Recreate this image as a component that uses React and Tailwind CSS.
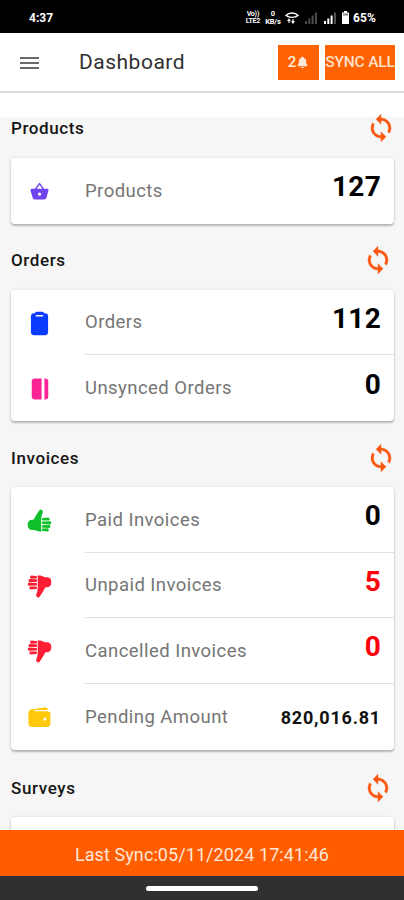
import React from "react";
import {
  IoBasket,
  IoClipboard,
  IoJournal,
  IoThumbsUp,
  IoThumbsDown,
  IoWallet,
  IoNotifications,
} from "react-icons/io5";

const sections = [
  {
    title: "Products",
    pad: "pr-2",
    head: "h-[65px] pt-[4px]",
    rows: [{ label: "Products", value: "127", icon: IoBasket, tint: "text-[#7044ee]", size: 23 }],
  },
  {
    title: "Orders",
    pad: "pr-[11px]",
    head: "h-[66px] pt-[7px]",
    rows: [
      { label: "Orders", value: "112", icon: IoClipboard, tint: "text-[#0a3cff]", size: 25 },
      { label: "Unsynced Orders", value: "0", icon: IoJournal, tint: "text-[#fb2596]", size: 24 },
    ],
  },
  {
    title: "Invoices",
    pad: "pr-2",
    head: "h-[66px] pt-[8px]",
    rows: [
      { label: "Paid Invoices", value: "0", icon: IoThumbsUp, tint: "text-[#0fc02c]", size: 25 },
      { label: "Unpaid Invoices", value: "5", icon: IoThumbsDown, tint: "text-[#ff1f35]", size: 25, red: true },
      { label: "Cancelled Invoices", value: "0", icon: IoThumbsDown, tint: "text-[#ff1f35]", size: 25, red: true },
      { label: "Pending Amount", value: "820,016.81", icon: IoWallet, tint: "text-[#ffc80a]", size: 25, small: true },
    ],
  },
  { title: "Surveys", pad: "pr-[11px]", head: "h-[67px] pt-[9px]", rows: [] },
];

function SyncIcon() {
  return (
    <svg width="30" height="30" viewBox="0 0 24 24" fill="#f9560f" stroke="#f9560f" strokeWidth="0.3">
      <path d="M12 4V1L8 5l4 4V6c3.31 0 6 2.69 6 6 0 1.01-.25 1.97-.7 2.8l1.46 1.46C19.54 15.03 20 13.57 20 12c0-4.42-3.58-8-8-8zm0 14c-3.31 0-6-2.69-6-6 0-1.01.25-1.97.7-2.8L5.24 7.74C4.46 8.97 4 10.43 4 12c0 4.42 3.58 8 8 8v3l4-4-4-4v3z" />
    </svg>
  );
}

function Bars({ dim }) {
  return (
    <svg width="14" height="12" viewBox="0 0 14 12" fill={dim ? "#4d4d4d" : "#fff"}>
      <rect x="1" y="9" width="2" height="3" />
      <rect x="4.3" y="6.5" width="2" height="5.5" />
      <rect x="7.6" y="3.5" width="2" height="8.5" />
      <rect x="10.9" y="0.5" width="2" height="11.5" fill={dim ? "#4d4d4d" : "#555"} />
    </svg>
  );
}

function StatusBar() {
  return (
    <div className="flex h-[33px] shrink-0 items-center bg-black pl-[29px] pr-[28px] pt-0.5 text-white">
      <span className="text-[12px] font-bold">4:37</span>
      <div className="ml-auto flex items-center">
        <div className="mr-[5px] flex w-[14px] flex-col items-center text-[7px] font-bold leading-[7px] tracking-[-0.2px]">
          <div>Vo))</div>
          <div>LTE2</div>
        </div>
        <div className="mr-[4px] flex w-[16px] flex-col items-center text-[7.5px] font-bold leading-[8px] tracking-[-0.2px]">
          <div>0</div>
          <div>KB/s</div>
        </div>
        <svg className="mr-[5px]" width="14" height="12" viewBox="0 0 14 12" fill="none" stroke="#fff" strokeWidth="1.4">
          <path d="M1 3.5C4 .2 10 .2 13 3.5C10 6 4 6 1 3.5Z" />
          <path d="M4 11V7M2.6 9 4 7.2 5.4 9M8 7V11M6.6 9.2 8 11l1.4-1.8" strokeWidth="1.1" />
        </svg>
        <Bars dim />
        <div className="w-[5px]" />
        <Bars />
        <svg className="ml-[5px] mr-[4px]" width="7" height="13" viewBox="0 0 7 13">
          <path d="M2 0h3v1.5h2V13H0V1.5h2z" fill="#fff" />
          <path d="M1 2.5h5v2H1z" fill="#888" />
        </svg>
        <span className="text-[12px] font-bold tracking-[0.15px]">65%</span>
      </div>
    </div>
  );
}

function Header() {
  return (
    <div className="flex h-[60px] shrink-0 items-center border-b-2 border-[#dcdcdc] bg-white pl-[20px] pr-[9px]">
      <div className="mt-0.5 flex w-[19px] flex-col gap-[3px]">
        <div className="h-[2px] bg-[#6b6b6b]" />
        <div className="h-[2px] bg-[#6b6b6b]" />
        <div className="h-[2px] bg-[#6b6b6b]" />
      </div>
      <h1 className="ml-[40px] mt-0.5 text-[21px] font-normal tracking-[0.5px] text-[#303030]">Dashboard</h1>
      <button className="ml-auto mt-px flex h-[35px] w-[41px] items-center justify-center bg-[#ff6200] text-[15px] font-medium text-[#ffe9db]">
        2<IoNotifications size={13} />
      </button>
      <button className="ml-[6px] mt-px flex h-[35px] w-[70px] items-center justify-center whitespace-nowrap bg-[#ff6200] text-[15.5px] font-medium tracking-[-0.15px] text-[#ffe0cc]">
        SYNC ALL
      </button>
    </div>
  );
}

function Row({ row, last }) {
  const Icon = row.icon;
  return (
    <div className="flex h-[65.7px] items-center">
      <div className={`flex w-[57px] shrink-0 justify-center pt-px ${row.tint}`}>
        <Icon size={row.size} />
      </div>
      <div className={`ml-[17px] flex h-full flex-1 items-center justify-between pr-[13px] ${last ? "" : "border-b border-[#e2e2e2]"}`}>
        <span className="pt-[2px] text-[18.5px] tracking-[0.45px] text-[#757575]">{row.label}</span>
        {row.small ? (
          <span className="pt-px text-[18px] font-bold tracking-[0.8px] text-[#111]">{row.value}</span>
        ) : (
          <span className={`pb-[7px] text-[28px] font-bold tracking-[0.3px] ${row.red ? "text-[#ff0008]" : "text-black"}`}>{row.value}</span>
        )}
      </div>
    </div>
  );
}

export default function App() {
  return (
    <div className="flex h-[900px] w-[404px] flex-col overflow-hidden bg-[#f6f6f6] font-['Roboto',sans-serif]">
      <StatusBar />
      <Header />
      <div className="min-h-0 flex-1 overflow-hidden bg-linear-to-b from-white from-[24px] to-[#f6f6f6] to-[24px]">
        {sections.map((s) => (
          <section key={s.title}>
            <div className={`flex items-center justify-between pl-[11px] ${s.pad} ${s.head}`}>
              <h2 className="pt-[2px] text-[17px] font-medium tracking-[0.6px] text-[#151515]">{s.title}</h2>
              <SyncIcon />
            </div>
            <div className="mx-[11px] mr-[10px] min-h-[65px] rounded-[4px] bg-white shadow-[0_2px_2px_rgba(0,0,0,0.24),0_0_3px_rgba(0,0,0,0.12)]">
              {s.rows.map((r, j) => (
                <Row key={r.label} row={r} last={j === s.rows.length - 1} />
              ))}
            </div>
          </section>
        ))}
      </div>
      <div className="flex h-[46px] shrink-0 items-center justify-center bg-[#ff5d00] pt-[3px] text-[18px] tracking-[0.08px] text-[#ffe6d8]">
        Last Sync:05/11/2024 17:41:46
      </div>
      <div className="flex h-[24px] shrink-0 items-center justify-center bg-[#303030]">
        <div className="h-[5px] w-[112px] rounded-full bg-white" />
      </div>
    </div>
  );
}
